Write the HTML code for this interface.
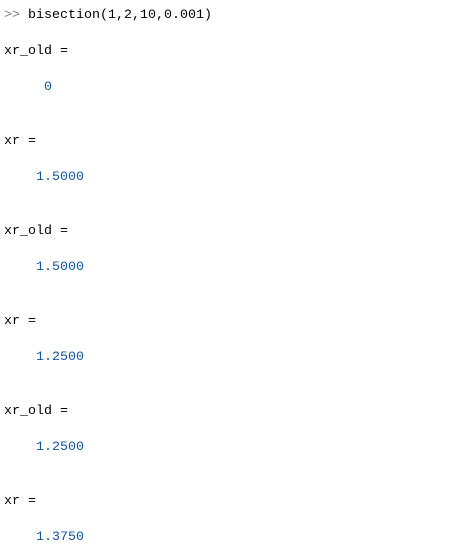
<!DOCTYPE html>
<html><head><style>
html,body{margin:0;padding:0;background:#fff;width:455px;height:545px;overflow:hidden}
pre{margin:0;padding:7px 0 0 4px;font-family:"Liberation Mono","Courier New",monospace;font-size:13.33px;line-height:18px;color:#000}
.g{color:#808080}.b{color:#1054a0}
</style></head><body>
<pre><span class="g">&gt;&gt;</span> bisection(1,2,10,0.001)

xr_old =

<span class="b">     0</span>


xr =

<span class="b">    1.5000</span>


xr_old =

<span class="b">    1.5000</span>


xr =

<span class="b">    1.2500</span>


xr_old =

<span class="b">    1.2500</span>


xr =

<span class="b">    1.3750</span>
</pre>
</body></html>
